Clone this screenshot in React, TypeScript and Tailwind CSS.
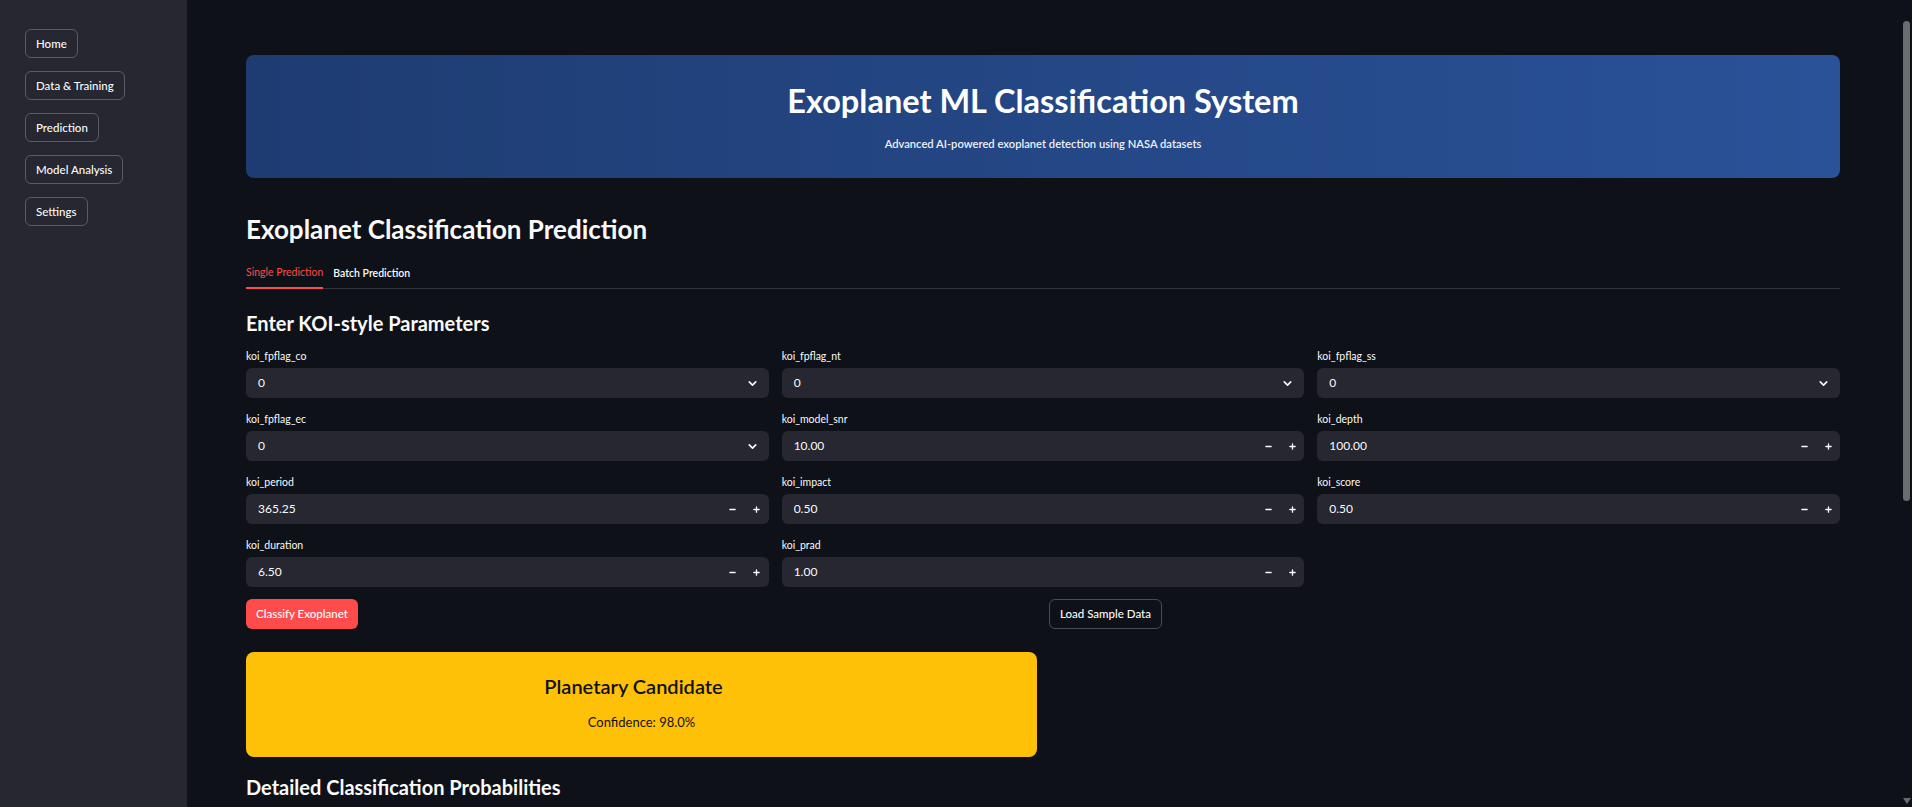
import { ChevronDown, Minus, Plus } from 'lucide-react';

const navItems = ['Home', 'Data & Training', 'Prediction', 'Model Analysis', 'Settings'];

type Field = { label: string; value: string; kind: 'select' | 'number' };

const fields: Field[] = [
  { label: 'koi_fpflag_co', value: '0', kind: 'select' },
  { label: 'koi_fpflag_nt', value: '0', kind: 'select' },
  { label: 'koi_fpflag_ss', value: '0', kind: 'select' },
  { label: 'koi_fpflag_ec', value: '0', kind: 'select' },
  { label: 'koi_model_snr', value: '10.00', kind: 'number' },
  { label: 'koi_depth', value: '100.00', kind: 'number' },
  { label: 'koi_period', value: '365.25', kind: 'number' },
  { label: 'koi_impact', value: '0.50', kind: 'number' },
  { label: 'koi_score', value: '0.50', kind: 'number' },
  { label: 'koi_duration', value: '6.50', kind: 'number' },
  { label: 'koi_prad', value: '1.00', kind: 'number' },
];

const FieldBox = ({ field }: { field: Field }) => {
  return (
    <div>
      <div className="h-[22px] leading-[22px] mb-[1px] text-[10.5px] text-[#fafafa]">{field.label}</div>
      <div className="h-[30px] bg-[#262730] rounded-[6px] flex items-center pl-[12px] text-[12px] text-[#fafafa]">
        <span className="flex-1">{field.value}</span>
        {field.kind === 'select' ? (
          <ChevronDown size={13} strokeWidth={3} className="mr-[10px] text-[#fafafa]" />
        ) : (
          <div className="flex items-center h-full">
            <div className="w-[24px] h-full flex items-center justify-center">
              <Minus size={9} strokeWidth={3.5} />
            </div>
            <div className="w-[24px] h-full flex items-center justify-center">
              <Plus size={9} strokeWidth={3.5} />
            </div>
          </div>
        )}
      </div>
    </div>
  );
};

const App = () => {
  return (
    <div
      className="relative flex h-[807px] overflow-hidden bg-[#0e1117] text-[#fafafa]"
      style={{ fontFamily: 'Lato, "Open Sans", sans-serif' }}
    >
      {/* sidebar */}
      <div className="w-[187px] shrink-0 bg-[#262730] pt-[29px] pl-[25px] flex flex-col items-start gap-[13px]">
        {navItems.map((item) => (
          <button
            key={item}
            className="h-[29px] px-[10px] rounded-[6px] border border-[#5a5b63] text-[11.5px] font-medium text-[#fafafa]"
          >
            {item}
          </button>
        ))}
      </div>

      {/* main */}
      <div className="flex-1 pl-[59px] pr-[72px]">
        <div className="mt-[55px] h-[123px] rounded-[8px] bg-gradient-to-r from-[#1e3c72] to-[#2a5298] flex flex-col items-center">
          <h1 className="mt-[28px] text-[32.5px] leading-[36px] font-bold text-white">
            Exoplanet ML Classification System
          </h1>
          <p className="mt-[17px] text-[11.2px] font-semibold text-[#eef1f8]">
            Advanced AI-powered exoplanet detection using NASA datasets
          </p>
        </div>

        <h2 className="mt-[35px] text-[26px] leading-[32px] font-bold">Exoplanet Classification Prediction</h2>

        <div className="mt-[14px] h-[30px] border-b border-[#31333f] flex items-stretch gap-[10px] text-[10.5px]">
          <div className="flex items-center border-b-2 border-[#ff4b4b] text-[#ff4b4b] -mb-[1px]">Single Prediction</div>
          <div className="flex items-center text-[#fafafa] font-semibold">Batch Prediction</div>
        </div>

        <h3 className="mt-[20px] text-[20px] leading-[28px] font-bold">Enter KOI-style Parameters</h3>

        <div className="mt-[8px] grid grid-cols-3 gap-x-[13px] gap-y-[10px]">
          {fields.map((f) => (
            <FieldBox key={f.label} field={f} />
          ))}
        </div>

        <div className="mt-[12px] grid grid-cols-2 gap-[12px]">
          <div>
            <button className="h-[30px] px-[10px] rounded-[6px] bg-[#ff4b4b] text-white text-[11.5px] font-medium">
              Classify Exoplanet
            </button>
          </div>
          <div>
            <button className="h-[30px] px-[10px] rounded-[6px] border border-[#4a4b53] text-[#fafafa] text-[11.5px] font-medium">
              Load Sample Data
            </button>
          </div>
        </div>

        <div className="mt-[23px] grid grid-cols-2 gap-[12px]">
          <div className="h-[105px] rounded-[8px] bg-[#ffc107] text-[#111111] flex flex-col items-center">
            <div className="mt-[21px] pr-[16px] text-[20px] leading-[26px] font-semibold">Planetary Candidate</div>
            <div className="mt-[14px] text-[13px] leading-[18px]">Confidence: 98.0%</div>
          </div>
        </div>

        <h3 className="mt-[16px] text-[20px] leading-[28px] font-bold">Detailed Classification Probabilities</h3>
      </div>

      {/* scrollbar overlay */}
      <div className="absolute right-[2px] top-[21px] w-[7px] h-[480px] rounded-full bg-[#6b6c70]" />
      <div className="absolute right-[1px] bottom-[3px] w-0 h-0 border-l-[4px] border-r-[4px] border-t-[6px] border-l-transparent border-r-transparent border-t-[#6b6c70]" />
    </div>
  );
};

export default App;
